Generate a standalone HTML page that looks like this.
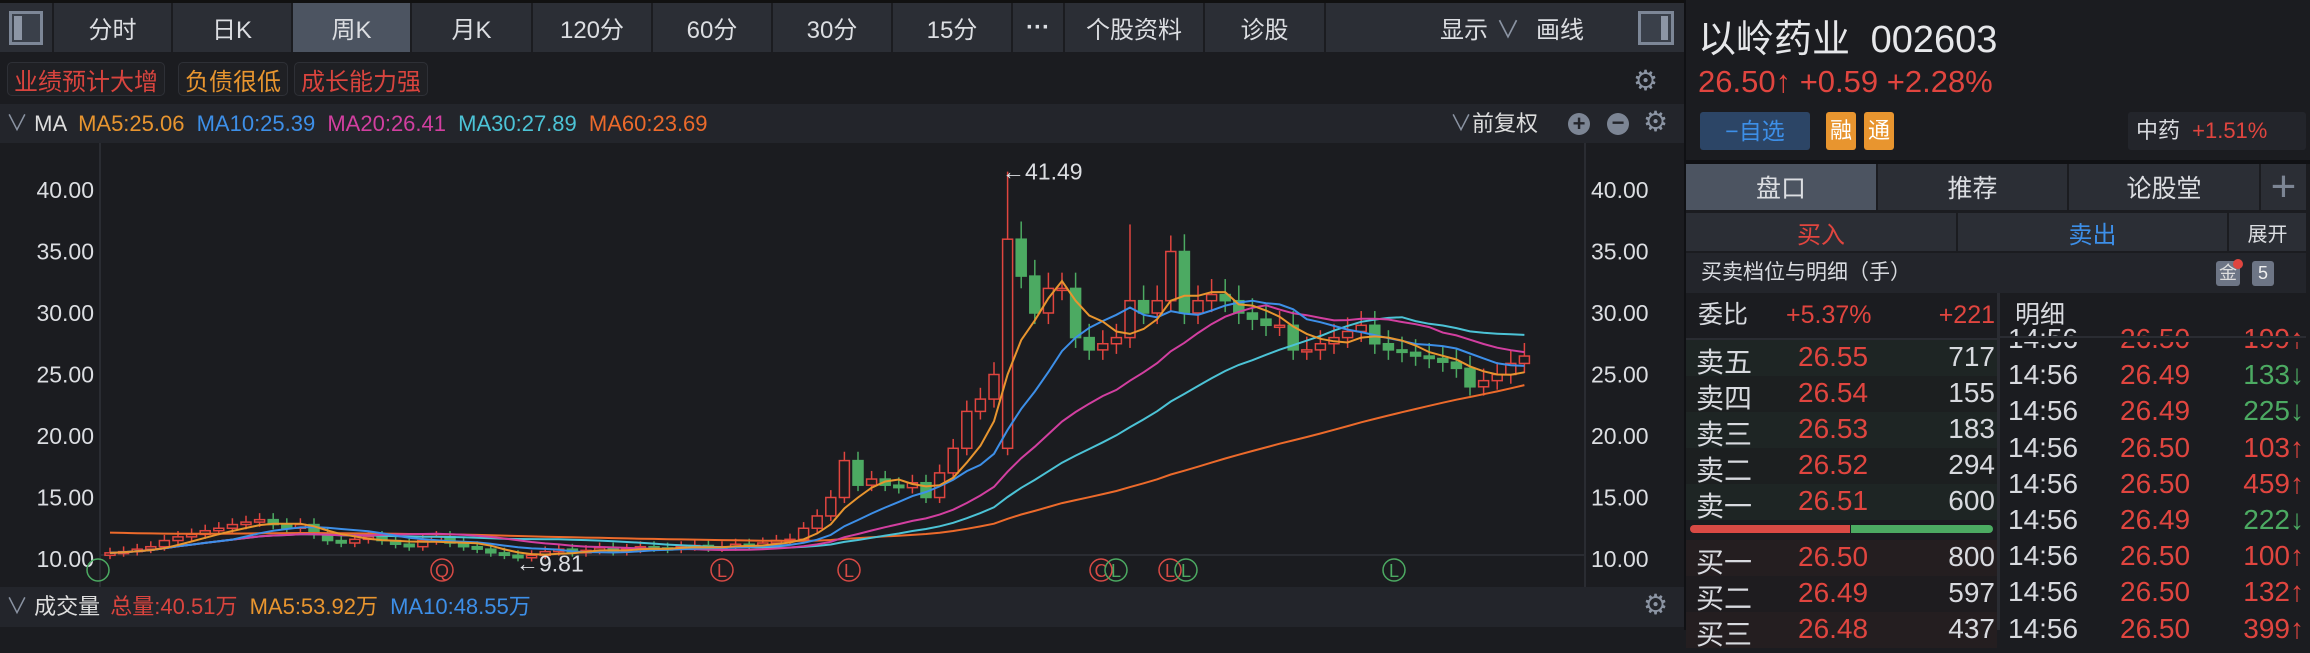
<!DOCTYPE html>
<html><head><meta charset="utf-8">
<style>
*{margin:0;padding:0;box-sizing:border-box}
body{width:2310px;height:630px;overflow:hidden;background:#1b1c20;font-family:"Liberation Sans","Noto Sans CJK SC",sans-serif;color:#d8dadf;position:relative}
.abs{position:absolute}
.tb{position:absolute;top:3px;height:49px;background:#2b2e35;color:#dcdee2;font-size:24px;display:flex;align-items:center;justify-content:center}
.act{background:#4c5461}
.tag{position:absolute;top:62px;height:34px;border:1px solid #2e3036;border-radius:5px;background:#1f2024;font-size:24px;display:flex;align-items:center;padding:0 6px}
.row{position:absolute;left:1686px;width:311px;height:36px;font-size:28px}
.row span{position:absolute;top:1px}
.d{position:absolute;left:2000px;width:306px;height:36px;font-size:28px}
.d span{position:absolute;top:1px}
.r{color:#e0453f}.g{color:#4caa62}
</style></head><body>
<div class="abs" style="left:0;top:0;width:1684px;height:3px;background:#111"></div>
<div class="tb" style="left:0;width:52px"><div style="width:34px;height:34px;border:3px solid #7d8797;background:#3a404a"><div style="width:8px;height:24px;background:#8d96a5;margin:2px"></div></div></div>
<div class="tb" style="left:54px;width:117px">分时</div>
<div class="tb" style="left:173px;width:118px">日K</div>
<div class="tb act" style="left:293px;width:117px">周K</div>
<div class="tb" style="left:412px;width:119px">月K</div>
<div class="tb" style="left:533px;width:118px">120分</div>
<div class="tb" style="left:653px;width:118px">60分</div>
<div class="tb" style="left:773px;width:118px">30分</div>
<div class="tb" style="left:893px;width:118px">15分</div>
<div class="tb" style="left:1013px;width:50px;font-weight:bold">···</div>
<div class="tb" style="left:1065px;width:138px">个股资料</div>
<div class="tb" style="left:1205px;width:119px">诊股</div>
<div class="tb" style="left:1326px;width:358px;justify-content:flex-start;padding-left:114px">显示 <span style="color:#8a93a2;margin:0 16px 0 8px">∨</span> 画线
<div style="position:absolute;left:312px;top:8px;width:36px;height:34px;border:3px solid #7d8797;background:#3a404a"><div style="width:7px;height:24px;background:#8d96a5;margin:2px 0 0 20px"></div></div></div>
<div class="tag" style="left:7px;color:#d9443e">业绩预计大增</div>
<div class="tag" style="left:178px;color:#e8952f">负债很低</div>
<div class="tag" style="left:294px;color:#d9443e">成长能力强</div>
<div class="abs" style="left:1633px;top:64px;color:#8b94a3;font-size:28px">⚙</div>
<div class="abs" style="left:0;top:104px;width:1684px;height:39px;background:#23252b;font-size:22px;line-height:39px;white-space:nowrap">
<span style="color:#8a93a2;margin-left:6px">∨</span> <span style="color:#ddd">MA</span>
<span style="color:#e8952f;margin-left:6px">MA5:25.06</span>
<span style="color:#3d8fe8;margin-left:6px">MA10:25.39</span>
<span style="color:#d23fa0;margin-left:6px">MA20:26.41</span>
<span style="color:#4cc3d6;margin-left:6px">MA30:27.89</span>
<span style="color:#ec6a2b;margin-left:6px">MA60:23.69</span>
<span style="position:absolute;left:1450px;color:#ddd"><span style="color:#8a93a2">∨</span>前复权</span>
<span style="position:absolute;left:1568px;top:9px;width:22px;height:22px;border-radius:11px;background:#7c8594;color:#23252b;font-weight:bold;line-height:22px;text-align:center;font-size:22px">+</span>
<span style="position:absolute;left:1607px;top:9px;width:22px;height:22px;border-radius:11px;background:#7c8594;color:#23252b;font-weight:bold;line-height:20px;text-align:center;font-size:22px">−</span>
<span style="position:absolute;left:1643px;top:-2px;color:#8b94a3;font-size:28px">⚙</span>
</div>
<svg id="ch" class="abs" style="left:0;top:143px" width="1684" height="444"></svg>
<div class="abs" style="left:0;top:587px;width:1684px;height:40px;background:#23252b;font-size:22px;line-height:40px;white-space:nowrap">
<span style="color:#8a93a2;margin-left:6px">∨</span> <span style="color:#ddd">成交量</span>
<span style="color:#d9443e;margin-left:4px">总量:40.51万</span>
<span style="color:#e8952f;margin-left:6px">MA5:53.92万</span>
<span style="color:#3d8fe8;margin-left:6px">MA10:48.55万</span>
<span style="position:absolute;left:1643px;top:-2px;color:#8b94a3;font-size:28px">⚙</span>
</div>
<div class="abs" style="left:1684px;top:0;width:2px;height:630px;background:#101114"></div>
<div class="abs" style="left:1698px;top:8px;font-size:38px;color:#e6e7ea;white-space:nowrap">以岭药业 <span style="margin-left:10px">002603</span></div>
<div class="abs" style="left:1698px;top:64px;font-size:31px;color:#e0453f;white-space:nowrap">26.50↑ +0.59 +2.28%</div>
<div class="abs" style="left:1700px;top:112px;width:110px;height:38px;background:#2c4566;border-radius:3px;color:#3d8fe8;font-size:23px;line-height:38px;text-align:center">−自选</div>
<div class="abs" style="left:1826px;top:112px;width:30px;height:38px;background:#e8952f;border-radius:3px;color:#fff;font-size:22px;line-height:38px;text-align:center">融</div>
<div class="abs" style="left:1864px;top:112px;width:30px;height:38px;background:#e8952f;border-radius:3px;color:#fff;font-size:22px;line-height:38px;text-align:center">通</div>
<div class="abs" style="left:2128px;top:112px;width:178px;height:38px;background:#23252b;border-radius:3px;font-size:22px;line-height:38px;padding-left:8px;white-space:nowrap">中药 <span class="r" style="margin-left:6px">+1.51%</span></div>
<div class="abs" style="left:1686px;top:160px;width:624px;height:4px;background:#101114"></div>
<div class="tb act" style="left:1686px;top:164px;width:190px;height:46px;font-size:25px">盘口</div>
<div class="tb" style="left:1878px;top:164px;width:189px;height:46px;font-size:25px">推荐</div>
<div class="tb" style="left:2069px;top:164px;width:190px;height:46px;font-size:25px">论股堂</div>
<div class="tb" style="left:2261px;top:164px;width:45px;height:46px;font-size:44px;color:#7c8594">+</div>
<div class="tb" style="left:1686px;top:213px;width:270px;height:38px;font-size:24px;color:#e0453f">买入</div>
<div class="tb" style="left:1958px;top:213px;width:269px;height:38px;font-size:24px;color:#3d8fe8">卖出</div>
<div class="tb" style="left:2229px;top:213px;width:77px;height:38px;font-size:20px">展开</div>
<div class="abs" style="left:1686px;top:253px;width:620px;height:40px;background:#23252b;font-size:21px;line-height:40px;padding-left:15px">买卖档位与明细（手）
<span style="position:absolute;left:530px;top:8px;width:24px;height:25px;background:#6d7585;border-radius:3px;font-size:18px;line-height:25px;text-align:center;color:#ddd">金</span>
<span style="position:absolute;left:547px;top:6px;width:10px;height:10px;border-radius:5px;background:#e0453f"></span>
<span style="position:absolute;left:566px;top:8px;width:22px;height:25px;background:#6d7585;border-radius:3px;font-size:18px;line-height:25px;text-align:center;color:#eee">5</span></div>
<div class="abs" style="left:1686px;top:293px;width:311px;height:45px;font-size:25px;line-height:45px">
<span style="position:absolute;left:12px">委比</span><span class="r" style="position:absolute;left:100px">+5.37%</span><span class="r" style="position:absolute;right:2px">+221</span></div>
<div class="abs" style="left:2000px;top:293px;width:306px;height:45px;font-size:25px;line-height:45px;padding-left:15px">明细</div>
<div class="abs" style="left:1686px;top:338px;width:311px;height:2px;background:#2a2c32"></div>
<div id="ob"></div>
<div class="abs" style="left:1690px;top:525px;width:160px;height:8px;border-radius:4px 0 0 4px;background:#d84a45"></div>
<div class="abs" style="left:1851px;top:525px;width:142px;height:8px;border-radius:0 4px 4px 0;background:#4caa62"></div>
<div class="abs" style="left:1997px;top:293px;width:3px;height:337px;background:#2a2c32"></div>
<script>
(function(){
var ob=document.getElementById('ob'),h='';
var sells=[['卖五','26.55','717'],['卖四','26.54','155'],['卖三','26.53','183'],['卖二','26.52','294'],['卖一','26.51','600']];
sells.forEach(function(s,i){var y=340+i*36;h+='<div class="row" style="top:'+y+'px;background:'+(i%2==0?'#1e2524':'#1c1f20')+'"><span style="left:10px">'+s[0]+'</span><span class="r" style="left:112px">'+s[1]+'</span><span style="right:2px">'+s[2]+'</span></div>';});
var buys=[['买一','26.50','800'],['买二','26.49','597'],['买三','26.48','437']];
buys.forEach(function(s,i){var y=540+i*36;h+='<div class="row" style="top:'+y+'px;background:'+(i%2==0?'#241e20':'#1e1c1f')+'"><span style="left:10px">'+s[0]+'</span><span class="r" style="left:112px">'+s[1]+'</span><span style="right:2px">'+s[2]+'</span></div>';});
var det=[['26.50','199↑',1],['26.49','133↓',0],['26.49','225↓',0],['26.50','103↑',1],['26.50','459↑',1],['26.49','222↓',0],['26.50','100↑',1],['26.50','132↑',1],['26.50','399↑',1]];
det.forEach(function(s,i){var y=322+i*36.2;h+='<div class="d" style="top:'+y+'px"><span style="left:8px">14:56</span><span class="r" style="left:120px">'+s[0]+'</span><span class="'+(s[2]?'r':'g')+'" style="right:2px">'+s[1]+'</span></div>';});
h+='<div class="abs" style="left:2000px;top:338px;width:306px;height:4px;background:#1b1c20"></div><div class="abs" style="left:2000px;top:336px;width:306px;height:2px;background:#2a2c32"></div>';
ob.innerHTML=h;
var C=[10.5,10.6,10.8,11,11.5,11.8,12,12.3,12.5,12.8,13,13.2,12.8,12.5,12.8,12,11.5,11.3,11.6,11.8,11.5,11.2,11,11.5,11.8,11.3,11,10.8,10.5,10.3,10.1,10.3,10.6,10.8,10.5,10.7,10.9,10.6,10.8,11,10.9,10.8,11,11.1,10.9,11,11.2,11.1,11.3,11.5,11.6,12.5,13.5,15,18,16,16.5,16,15.8,16.2,15,17,19,22,23,25,36,33,30,32,32,28,27,27.5,28,31,30,31,35,30,31,31.5,31,30,29.5,29,29,27,27,27.5,28,28.5,29,27.5,27,26.8,26.5,26.3,26,25.5,24,24.5,25,25.9,26.5];
var Y=function(p){return 47+(40-p)*12.3;};
var X=function(i){return 110+i*13.6;};
var s='';
s+='<line x1="100" y1="0" x2="100" y2="444" stroke="#2a2c32" stroke-width="2"/><line x1="1585" y1="0" x2="1585" y2="444" stroke="#2a2c32" stroke-width="2"/>';
s+='<line x1="100" y1="412" x2="1585" y2="412" stroke="#2a2c32" stroke-width="2"/>';
[40,35,30,25,20,15,10].forEach(function(p){var y=Y(p)+8;s+='<text x="94" y="'+y+'" fill="#dcdee2" font-size="23" text-anchor="end" font-family="Liberation Sans">'+p.toFixed(2)+'</text><text x="1591" y="'+y+'" fill="#dcdee2" font-size="23" font-family="Liberation Sans">'+p.toFixed(2)+'</text>';});
function ma(n,col){var pts=[];for(var i=0;i<C.length;i++){var a=0,k=0;for(var j=Math.max(0,i-n+1);j<=i;j++){a+=C[j];k++;}var v=a/k;if(n==60&&i<60){v=v*(0.9+0.1*i/60)+ (13.5-v)*(1-i/60)*0.9;}pts.push(X(i).toFixed(1)+','+Y(v).toFixed(1));}s+='<polyline points="'+pts.join(' ')+'" fill="none" stroke="'+col+'" stroke-width="2"/>';}
for(var i=0;i<C.length;i++){var o=i?C[i-1]:C[0]-0.2,c=C[i];if(i==66)o=19;var hi=Math.max(o,c)*1.04,lo=Math.min(o,c)*0.97;if(i==66)hi=41.49;if(i==75)hi=37.2;if(i==78)hi=36.3;if(i==30)lo=9.81;var up=c>=o,col=up?'#e0453f':'#4caa62',x=X(i);
s+='<line x1="'+x+'" y1="'+Y(hi)+'" x2="'+x+'" y2="'+Y(lo)+'" stroke="'+col+'" stroke-width="1.5"/>';
var t=Y(Math.max(o,c)),b=Y(Math.min(o,c));if(b-t<2)b=t+2;
s+='<rect x="'+(x-5)+'" y="'+t+'" width="10" height="'+(b-t)+'" fill="'+(up?'#1b1c20':col)+'" stroke="'+col+'" stroke-width="1.5"/>';}
ma(60,'#ec6a2b');ma(30,'#4cc3d6');ma(20,'#d23fa0');ma(10,'#3d8fe8');ma(5,'#e8952f');
s+='<text x="1002" y="'+(Y(41.49)+8)+'" fill="#dcdee2" font-size="23" font-family="Liberation Sans">←41.49</text>';
s+='<text x="516" y="'+(Y(9.81)+10)+'" fill="#dcdee2" font-size="23" font-family="Liberation Sans">←9.81</text>';
[[442,'Q','#d84a45'],[722,'L','#d84a45'],[849,'L','#d84a45'],[1101,'C','#d84a45'],[1116,'L','#4caa62'],[1170,'L','#d84a45'],[1186,'L','#4caa62'],[1394,'L','#4caa62'],[98,'','#4caa62']].forEach(function(m){s+='<circle cx="'+m[0]+'" cy="427" r="11" fill="none" stroke="'+m[2]+'" stroke-width="1.5"/><text x="'+m[0]+'" y="434" fill="'+m[2]+'" font-size="18" text-anchor="middle" font-family="Liberation Sans">'+m[1]+'</text>';});
document.getElementById('ch').innerHTML=s;
})();
</script>
</body></html>
